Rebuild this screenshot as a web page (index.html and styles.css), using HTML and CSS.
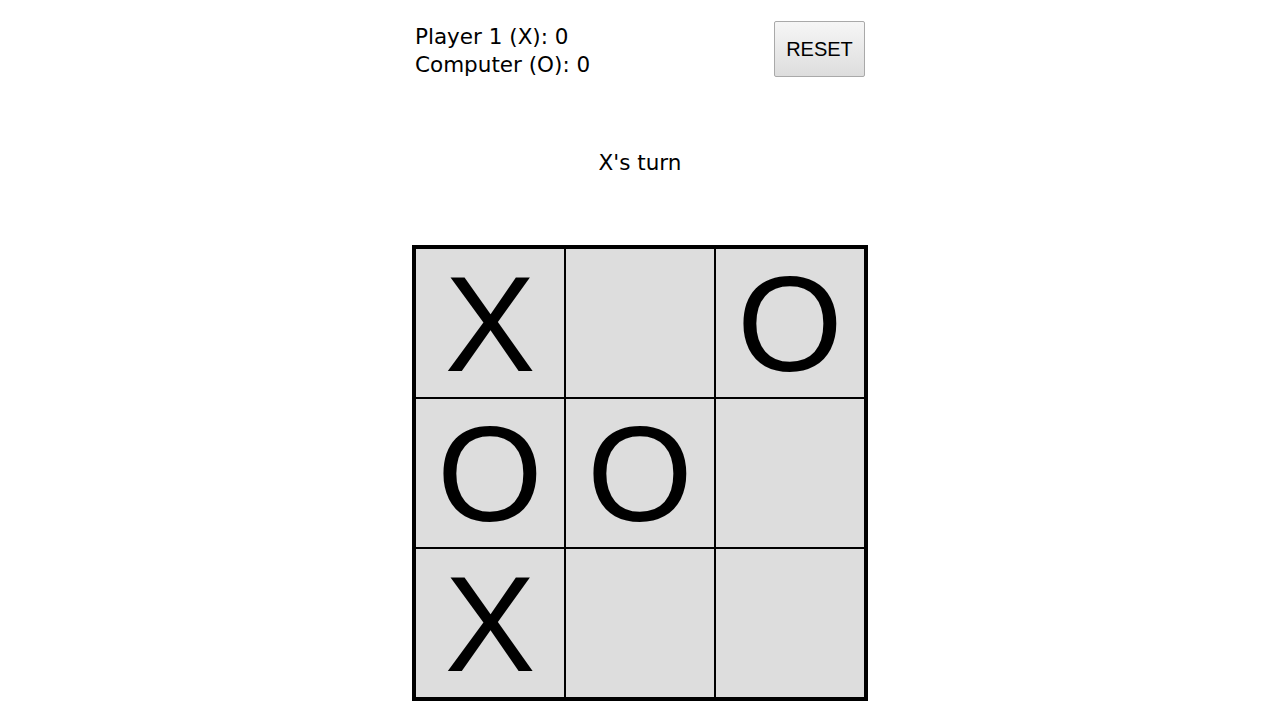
FILE: index.html
```html
<!DOCTYPE html>
<html>
<head>
<meta charset="utf-8">
<link rel="stylesheet" href="styles.css">
</head>
<body>
<main class="game">
  <header class="top">
    <div class="scores">
      <div>Player 1 (X): 0</div>
      <div>Computer (O): 0</div>
    </div>
    <button class="reset">RESET</button>
  </header>
  <div class="status">X's turn</div>
  <div class="board">
    <div class="cell">X</div>
    <div class="cell"></div>
    <div class="cell">O</div>
    <div class="cell">O</div>
    <div class="cell">O</div>
    <div class="cell"></div>
    <div class="cell">X</div>
    <div class="cell"></div>
    <div class="cell"></div>
  </div>
</main>
</body>
</html>
```
FILE: styles.css
```css
html, body {
  margin: 0;
  padding: 0;
  background: #fff;
}
body {
  font-family: "DejaVu Sans", sans-serif;
  color: #000;
}
.game {
  display: flex;
  flex-direction: column;
  align-items: center;
  padding-top: 21px;
}
.top {
  width: 450px;
  display: flex;
  justify-content: space-between;
  align-items: flex-start;
}
.scores {
  font-size: 21.5px;
  line-height: 28px;
  padding-top: 2px;
}
.reset {
  width: 91px;
  height: 56px;
  margin: 0;
  font-family: "Liberation Sans", Arial, sans-serif;
  font-size: 20px;
  color: #000;
  background: linear-gradient(#f6f6f6, #dddddd);
  border: 1px solid #a9a9a9;
  border-radius: 2px;
  padding: 0;
}
.status {
  margin-top: 70px;
  font-size: 21.5px;
  line-height: 28px;
}
.board {
  margin-top: 68px;
  display: grid;
  grid-template-columns: repeat(3, 150px);
  border: 3px solid #000;
}
.cell {
  width: 148px;
  height: 143px;
  padding-top: 5px;
  border: 1px solid #000;
  background: #dddddd;
  font-family: "Liberation Sans", Arial, sans-serif;
  font-size: 136px;
  line-height: 140px;
  text-align: center;
}
```
